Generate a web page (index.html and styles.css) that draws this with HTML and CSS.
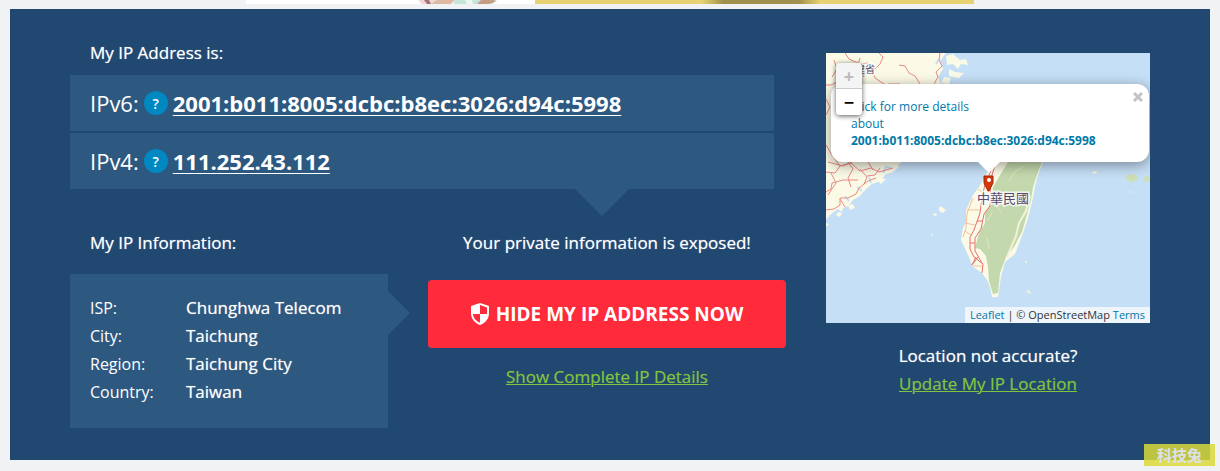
FILE: index.html
```html
<!DOCTYPE html>
<html lang="en">
<head>
    <meta charset="UTF-8">
    <meta name="viewport" content="width=device-width, initial-scale=1.0">
    <title>My IP Address</title>
    <link rel="stylesheet" href="styles.css">
</head>
<body>
    <div class="banner">
        <div class="banner-photo">
            <svg viewBox="0 0 100 4" width="100" height="4" aria-hidden="true">
                <path d="M7 0l4 4h12l4-4z" fill="#efd9d0"/>
                <path d="M13 0l3 4h4l-2-4z" fill="#a8707a"/>
                <path d="M26 0l-6 4h20l4-4z" fill="#dfb8a6"/>
                <path d="M44 0l-2 4h40l2-4z" fill="#c5e6d8"/>
                <path d="M54 0l2 4h6l-1-4z" fill="#eef7f2"/>
                <path d="M70 0l-4 4h12l8-3-4-1z" fill="#c69c84"/>
            </svg>
        </div>
        <div class="banner-offer"></div>
    </div>

    <main class="ip-panel">
        <div class="ip-main">
            <!-- Addresses -->
            <section>
                <h2 class="panel-title">My IP Address is:</h2>
                <div class="ip-list">
                    <p class="ip-row">
                        <span>IPv6:</span>
                        <button class="help-btn" type="button" aria-label="What is IPv6">?</button>
                        <a class="ip-link" href="#">2001:b011:8005:dcbc:b8ec:3026:d94c:5998</a>
                    </p>
                    <p class="ip-row">
                        <span>IPv4:</span>
                        <button class="help-btn" type="button" aria-label="What is IPv4">?</button>
                        <a class="ip-link" href="#">111.252.43.112</a>
                    </p>
                </div>
            </section>

            <div class="ip-bottom">
                <!-- Details -->
                <section>
                    <h2 class="panel-title">My IP Information:</h2>
                    <div class="info-box">
                        <table class="info-table">
                            <tr><th scope="row">ISP:</th><td>Chunghwa Telecom</td></tr>
                            <tr><th scope="row">City:</th><td>Taichung</td></tr>
                            <tr><th scope="row">Region:</th><td>Taichung City</td></tr>
                            <tr><th scope="row">Country:</th><td>Taiwan</td></tr>
                        </table>
                    </div>
                </section>

                <section class="exposed">
                    <h2 class="exposed-title">Your private information is exposed!</h2>
                    <button class="hide-btn" type="button">
                        <svg class="shield" viewBox="0 0 18 22" width="18" height="22" aria-hidden="true">
                            <path d="M9 0L0 3v7c0 6 4 10 9 12 5-2 9-6 9-12V3z" fill="#fff"/>
                            <path d="M9 2l7 2.500V11H9zM2 11h7v8.800C5 18 2.300 15 2 11z" fill="#ff2a3a"/>
                        </svg>
                        HIDE MY IP ADDRESS NOW
                    </button>
                    <a class="green-link" href="#">Show Complete IP Details</a>
                </section>
            </div>
        </div>

        <!-- Map -->
        <aside class="location">
            <div class="map">
                <svg class="map-tiles" viewBox="0 0 324 270" preserveAspectRatio="xMidYMid slice" role="img" aria-label="Map of Taiwan">
                    <rect width="324" height="270" fill="#c5dff6"/>
                    <!-- mainland -->
                    <path d="M0 0H120L114 8 117 16 112 24 115 32 100 60 84 90 76 109 71 113 67 119 60 121 54 128 46 131 40 136 34 143 27 147 22 153 17 155 16 159 12 156 9 158 4 162 0 167z" fill="#fbfae6"/>
                    <path d="M120 3l7-2 7 6 6-1 2 6-7-1-3 5-5-5-6 1zM123 16l6 3 9 1-5 5-10-2zM118 24l7 1-2 6-8-1zM113 155l2-2 2 2 3 2-3 3-4-2zM107 161l3-1 1 2-3 1zM105 181h2l-1 2zM64 113l6-2 3 3-5 4zM51 127l4-2 5 1-5 5zM22 152l5-1 2 4-5 2zM12 159l4 1-2 4-4-2zM0 170l3 1-3 3z" fill="#fbfae6"/>
                    <path d="M57 120l3-6 5 1M45 130l-2-6M113 6l-3 5M36 138l-5-4M23 148l-4-5" fill="none" stroke="#c5dff6" stroke-width="2"/>
                    <path d="M299 126l3-5 8 1 2 4-7 4-3-3zM317 126l3-3 4 1v4l-5 1z" fill="#cddfb4"/>
                    <path d="M266 119l4-1 1 2-4 1zM303 138l3 1-2 1zM199 208h2v2h-2zM200 238l3-1 2 4-3-1z" fill="#f2f3d4"/>
                    <g fill="none" stroke="#e98a84" stroke-width="1">
                        <path d="M19 0l4 6 11 5 8-1 7 6 5-5 3-7-4-4M45 15l4 10 9 6 7 2M73 12l6 1 4 7 6 3 5 8M114 0l-1 7 3 6-6 6 2 5-4 7M0 32l5 0 8-4 8 3M8 7l3 9-5 8M34 5l-2 7 6 12M62 31l12 0"/>
                        <path d="M0 46l4 8-4 8M0 92l6 10 8 11 11-3 9 8 11-3 8 4 14-4M2 109l15 4 11-5M22 109l5 7-5 9 3 9M34 116l7 8-3 7M41 123l8-1 5-7M14 113l-5 7-9-1M0 157l8-1 6-4v-7h8l8-4 3-6 9-7 8-3M0 139l5-3 1-6 11-3h15M14 146l5 8M42 109l5 8M5 120l5 10-8 12"/>
                    </g>
                    <!-- Taiwan -->
                    <path d="M171 109H217L212 122 209 133 207 145 202 165 197 180 189 201 179 209 175 224 172 244 166 244 164 234 161 227 156 220 147 214 142 202 135 187 137 175 140 169 140 157 147 142 153 134 161 120z" fill="#fbfae6"/>
                    <path d="M182 109H216L211 122 207 134 205 147 200 165 196 179 188 194 180 204 174 220 172 240 167 241 163 228 162 214 160 203 154 196 149 195 153 180 159 170 159 159 165 152 167 134 173 124z" fill="#c3d9ad"/>
                    <path d="M204 142L200 158 193 170 190 183 181 204" fill="none" stroke="#f3f2d8" stroke-width="2"/>
                    <path d="M199 112l-10 7-6 9M172 142l-1 12 4 5M161 184l2 12M166 160l-5 8" fill="none" stroke="#e3e7c6" stroke-width="1"/>
                    <path d="M168 109L164 120 159 131 156 145 154 160 148 177 144 184 144 196 148 204 157 211 156 220M170 109L166 122 164 140 164 153 158 161 155 176 149 185 149 198 156 210M144 190H149M151 168H156M152 204L146 212 150 204" fill="none" stroke="#e8706b" stroke-width="1"/>
                    <path d="M141 157H154M139 170L149 172M139 178L146 183M147 213H156M147 145L141 160 140 175 137 184M152 136L158 140" fill="none" stroke="#f3c19c" stroke-width="1"/>
                    <g class="map-labels">
                        <text x="29" y="20">建省</text>
                        <text class="country" x="151" y="150">中華民國</text>
                    </g>
                    <path d="M158 123h9v7l-4 8h-1l-4-8z" fill="#d63809" stroke="#9a2a08" stroke-width="1"/>
                    <circle cx="163" cy="127" r="2" fill="#fff"/>
                </svg>

                <div class="map-popup">
                    <a href="#">Click for more details<br>about<br><b>2001:b011:8005:dcbc:b8ec:3026:d94c:5998</b></a>
                    <button class="popup-close" type="button" aria-label="Close popup">
                        <svg viewBox="0 0 10 10" width="10" height="10" aria-hidden="true">
                            <path d="M1 1l8 8M9 1l-8 8" stroke="#c3c3c3" stroke-width="3"/>
                        </svg>
                    </button>
                </div>

                <div class="map-zoom">
                    <button class="zoom-btn zoom-off" type="button" aria-label="Zoom in">+</button>
                    <button class="zoom-btn" type="button" aria-label="Zoom out">−</button>
                </div>

                <div class="map-credit"><a href="#">Leaflet</a> | © OpenStreetMap <a href="#">Terms</a></div>
            </div>
            <p class="location-note">Location not accurate?</p>
            <a class="green-link" href="#">Update My IP Location</a>
        </aside>
    </main>

    <div class="watermark">科技兔</div>
</body>
</html>
```

FILE: styles.css
```css
* {
    margin: 0;
    padding: 0;
    box-sizing: border-box;
}

body {
    position: relative;
    font-family: "Open Sans", "Noto Sans CJK TC", sans-serif;
    font-size: 17px;
    line-height: 28px;
    color: #fff;
    background: #f1f2f4;
    padding: 0 10px 11px;
}

button {
    font-family: inherit;
    border: none;
    cursor: pointer;
}

/* Banner above the panel */
.banner {
    display: grid;
    grid-template-columns: 289fr 439fr;
    max-width: 728px;
    height: 4px;
    margin: 0 auto 5px;
}

.banner-photo {
    padding-left: 165px;
    background: #fff;
    overflow: hidden;
}

.banner-photo svg {
    display: block;
}

.banner-offer {
    background: linear-gradient(90deg, transparent 38%, #a08f4d 43%, #a08f4d 60%, transparent 65%) #e8d272;
}

/* Panel */
.ip-panel {
    display: grid;
    grid-template-columns: 1fr 324px;
    gap: 40px;
    padding: 30px 60px 32px;
    background: #204871;
}

.panel-title,
.exposed-title {
    font-size: 17px;
    font-weight: 500;
}

.panel-title,
.exposed-title,
.info-table td,
.location-note {
    text-shadow: 0 0 1px rgba(255, 255, 255, 0.6);
}

.panel-title {
    padding-left: 20px;
}

.ip-list {
    position: relative;
    display: grid;
    gap: 2px;
    margin: 8px 12px 0 0;
}

.ip-list::after {
    content: "";
    position: absolute;
    top: 100%;
    right: 145px;
    border: 27px solid transparent;
    border-top-color: #2d587f;
    border-bottom: 0;
}

.ip-row {
    display: flex;
    align-items: center;
    gap: 5px;
    min-height: 56px;
    padding: 0 20px;
    font-size: 22px;
    background: #2d587f;
}

.help-btn {
    width: 24px;
    height: 24px;
    border-radius: 50%;
    font-size: 14px;
    font-weight: 600;
    color: #fff;
    background: #0088c2;
}

.ip-link {
    font-weight: 700;
    color: #fff;
    text-decoration-thickness: 1px;
    text-underline-offset: 3px;
}

.ip-bottom {
    display: grid;
    grid-template-columns: 318fr 358fr;
    gap: 40px;
    margin-top: 40px;
}

.info-box {
    position: relative;
    margin-top: 17px;
    padding: 20px 20px 22px;
    background: #2d587f;
}

.info-box::after {
    content: "";
    position: absolute;
    left: 100%;
    top: 17px;
    border: 22px solid transparent;
    border-left-color: #2d587f;
    border-right: 0;
}

.info-table {
    border-collapse: collapse;
    text-align: left;
}

.info-table th {
    width: 96px;
    font-size: 16px;
    font-weight: 400;
}

.info-table td {
    font-weight: 500;
}

.exposed {
    text-align: center;
}

.hide-btn {
    display: flex;
    align-items: center;
    justify-content: center;
    gap: 7px;
    width: 100%;
    height: 68px;
    margin: 23px 0 15px;
    border-radius: 4px;
    font-size: 19px;
    font-weight: 700;
    color: #fff;
    background: #ff2a3a;
}

.green-link {
    color: #82c341;
    text-decoration-thickness: 1px;
    text-shadow: 0 0 1px rgba(130, 195, 65, 0.5);
}

/* Map */
.location {
    padding-top: 14px;
    text-align: center;
}

.location-note {
    margin-top: 19px;
    font-weight: 500;
}

.map {
    position: relative;
    height: 270px;
    overflow: hidden;
    text-align: left;
}

.map-tiles {
    display: block;
    width: 100%;
    height: 100%;
}

.map-labels {
    font-size: 10px;
    fill: #5a4a6e;
    stroke: rgba(255, 255, 255, 0.8);
    stroke-width: 3px;
    paint-order: stroke;
}

.map-labels .country {
    font-size: 13px;
}

.map-popup {
    position: absolute;
    top: 31px;
    left: 5px;
    right: 1px;
    padding: 14px 20px 13px;
    border-radius: 12px;
    font-size: 12px;
    line-height: 17px;
    background: #fff;
    box-shadow: 0 3px 14px rgba(0, 0, 0, 0.4);
}

.map-popup::after {
    content: "";
    position: absolute;
    top: 100%;
    left: 50%;
    margin-left: -12px;
    border: 11px solid transparent;
    border-top-color: #fff;
    border-bottom: 0;
}

.map-popup a,
.map-credit a {
    color: #0078a8;
    text-decoration: none;
}

.map-credit a {
    font-weight: 500;
}

.popup-close {
    position: absolute;
    top: 8px;
    right: 6px;
    display: flex;
    background: none;
}

.map-zoom {
    position: absolute;
    top: 10px;
    left: 10px;
    display: grid;
    width: 26px;
    border-radius: 4px;
    overflow: hidden;
    box-shadow: 0 1px 5px rgba(0, 0, 0, 0.65);
}

.zoom-btn {
    height: 26px;
    font-size: 18px;
    font-weight: 700;
    line-height: 26px;
    color: #000;
    background: #fff;
}

.zoom-off {
    border-bottom: 1px solid #ccc;
    color: #bbb;
    background: #f4f4f4;
}

.map-credit {
    position: absolute;
    right: 0;
    bottom: 0;
    padding: 0 5px;
    font-size: 11px;
    line-height: 16px;
    color: #333;
    background: rgba(255, 255, 255, 0.7);
}

.watermark {
    position: absolute;
    right: 5px;
    bottom: 5px;
    padding: 0 13px;
    font-size: 15px;
    font-weight: 700;
    line-height: 22px;
    color: #dfe1ea;
    background: rgba(217, 219, 58, 0.85);
}
```
